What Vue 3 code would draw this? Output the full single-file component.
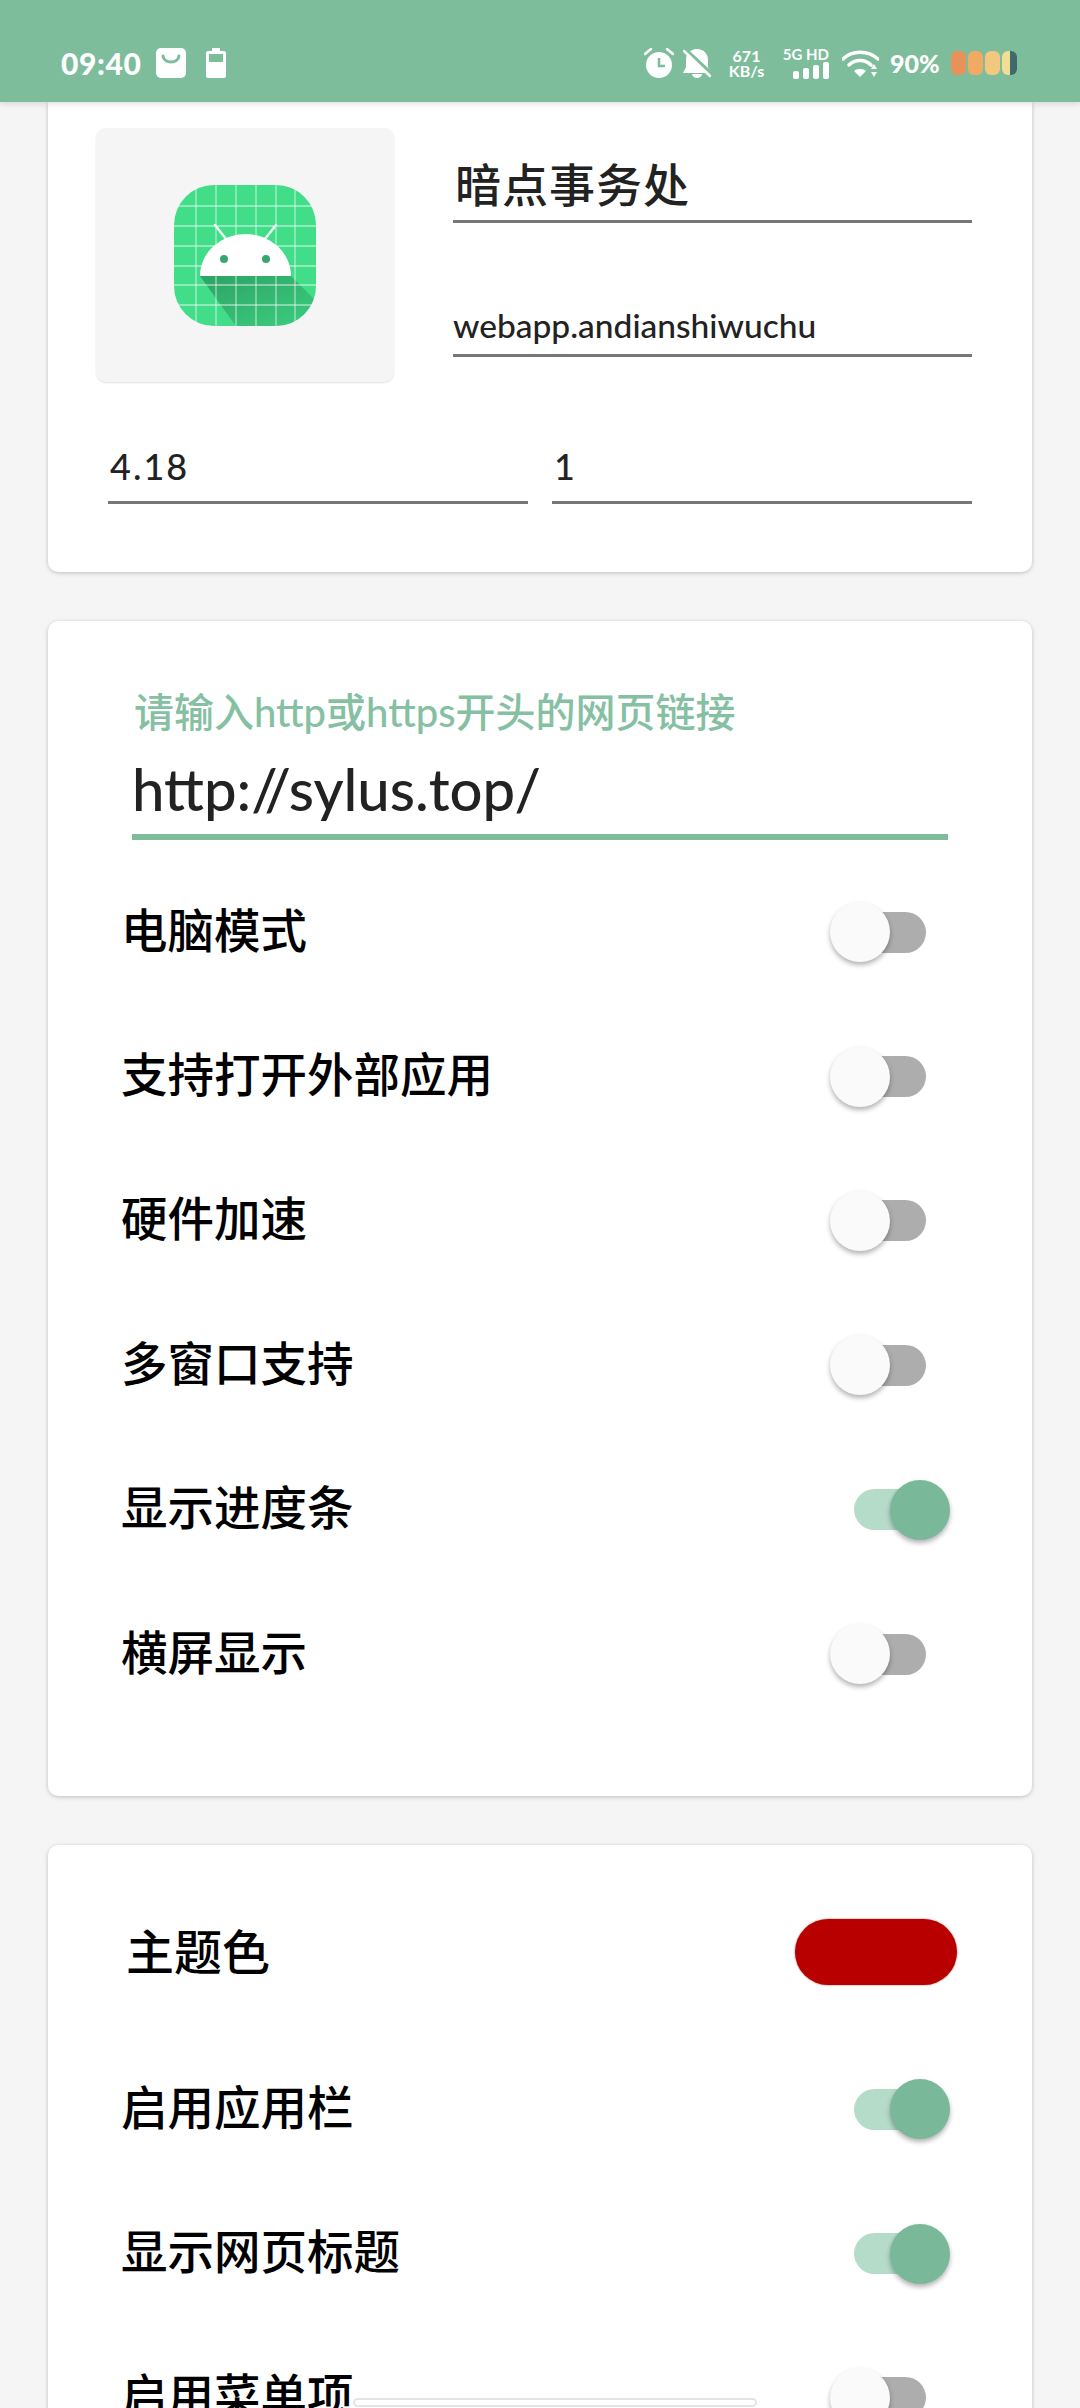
<script setup>
const gridX = [22, 42, 62, 82, 102, 121]
const gridY = [21, 41, 61, 81, 100, 120]

const webRows = [
  { label: '电脑模式', on: false },
  { label: '支持打开外部应用', on: false },
  { label: '硬件加速', on: false },
  { label: '多窗口支持', on: false },
  { label: '显示进度条', on: true },
  { label: '横屏显示', on: false }
]

const themeRows = [
  { label: '启用应用栏', on: true },
  { label: '显示网页标题', on: true },
  { label: '启用菜单项', on: false }
]

const batteryCells = ['#e8925a', '#f0aa64', '#f4c77f', '#f3dc96']
</script>

<template>
  <div class="page">
    <header class="status">
      <div class="status-left">
        <span class="time">09:40</span>
        <svg class="bag" width="30" height="30" viewBox="0 0 30 30">
          <path d="M5 0h20a5 5 0 0 1 5 5v20a5 5 0 0 1-5 5H5a5 5 0 0 1-5-5V5a5 5 0 0 1 5-5z" fill="#fff" />
          <path d="M7 8c1 8 15 8 16 0" fill="none" stroke="#7dbd9b" stroke-width="3" stroke-linecap="round" />
        </svg>
        <svg class="cell" width="20" height="30" viewBox="0 0 20 30">
          <path d="M6 0h8v3h4a2 2 0 0 1 2 2v23a2 2 0 0 1-2 2H2a2 2 0 0 1-2-2V5a2 2 0 0 1 2-2h4z" fill="#fff" />
          <rect x="3" y="6" width="14" height="8" fill="#7dbd9b" />
        </svg>
      </div>
      <div class="status-right">
        <svg class="alarm" width="30" height="30" viewBox="0 0 30 30">
          <circle cx="15" cy="17" r="13" fill="#fff" />
          <path d="M1 6l6-5M29 6l-6-5" stroke="#fff" stroke-width="2.5" stroke-linecap="round" />
          <path d="M15 10v8h6" fill="none" stroke="#7dbd9b" stroke-width="2.5" />
        </svg>
        <svg class="bell" width="28" height="29" viewBox="0 0 28 29">
          <path d="M14 0c7 0 11 5 11 11v7l3 6H0l3-6v-7C3 5 7 0 14 0z" fill="#fff" />
          <path d="M9 25h10a5 4 0 0 1-10 0z" fill="#fff" />
          <path d="M2 0l27 25" stroke="#7dbd9b" stroke-width="3.5" />
          <path d="M1 2l26 25" stroke="#fff" stroke-width="2.5" stroke-linecap="round" />
        </svg>
        <div class="speed">
          <span>671</span>
          <span>KB/s</span>
        </div>
        <div class="signal">
          <span>5G HD</span>
          <svg width="36" height="17" viewBox="0 0 36 17">
            <rect x="0" y="9" width="6" height="8" rx="2" fill="#fff" />
            <rect x="10" y="6" width="6" height="11" rx="2" fill="#fff" />
            <rect x="20" y="3" width="6" height="14" rx="2" fill="#fff" />
            <rect x="30" y="0" width="6" height="17" rx="2" fill="#fff" />
          </svg>
        </div>
        <svg class="wifi" width="37" height="29" viewBox="0 0 37 29">
          <path d="M1 10c9-9 25-9 35 0" fill="none" stroke="#fff" stroke-width="3.5" stroke-linecap="round" />
          <path d="M7 16c6-6 16-6 22 0" fill="none" stroke="#fff" stroke-width="3.5" stroke-linecap="round" />
          <path d="M12 22c4-3 8-3 12 0l-6 6z" fill="#fff" />
          <path d="M29 20l3-5 3 5zM29 23h6l-3 5z" fill="#fff" />
        </svg>
        <span class="percent">90%</span>
        <div class="battery">
          <span v-for="color in batteryCells" :key="color" class="battery-cell" :style="{ background: color }"></span>
          <span class="battery-end"></span>
        </div>
      </div>
    </header>

    <main class="content">
      <section class="card app-card">
        <div class="app-top">
          <div class="icon-box">
            <svg width="142" height="141" viewBox="0 0 142 141">
              <defs>
                <clipPath id="squircle">
                  <rect width="142" height="141" rx="40" />
                </clipPath>
                <linearGradient id="fade" x1="0.15" y1="0" x2="0.85" y2="1">
                  <stop offset="0" stop-color="#2a9c60" stop-opacity="0.85" />
                  <stop offset="1" stop-color="#2a9c60" stop-opacity="0.1" />
                </linearGradient>
              </defs>
              <g clip-path="url(#squircle)">
                <rect width="142" height="141" fill="#42dd88" />
                <path d="M26 91h91l40 40v30H76z" fill="url(#fade)" />
                <path v-for="x in gridX" :key="x" :d="`M${x} 0v141`" stroke="#fff" stroke-opacity="0.55" stroke-width="1.3" />
                <path v-for="y in gridY" :key="y" :d="`M0 ${y}h142`" stroke="#fff" stroke-opacity="0.55" stroke-width="1.3" />
              </g>
              <path d="M41 40l11 14M102 40l-11 14" stroke="#e8fbf0" stroke-width="2.5" stroke-linecap="round" />
              <path d="M26 91a45.500 42 0 0 1 91 0z" fill="#fff" />
              <circle cx="50" cy="74" r="4" fill="#36a86c" />
              <circle cx="92" cy="74" r="4" fill="#36a86c" />
            </svg>
          </div>
          <div class="app-fields">
            <div class="field title-field">暗点事务处</div>
            <div class="field package-field">webapp.andianshiwuchu</div>
          </div>
        </div>
        <div class="version-row">
          <div class="field version-field">4.18</div>
          <div class="field version-field">1</div>
        </div>
      </section>

      <section class="card web-card">
        <div class="url-box">
          <div class="url-label">请输入http或https开头的网页链接</div>
          <div class="url-value">http://sylus.top/</div>
        </div>
        <div v-for="row in webRows" :key="row.label" class="row">
          <span class="row-label">{{ row.label }}</span>
          <span class="switch" :class="{ on: row.on }">
            <span class="track"></span>
            <span class="thumb"></span>
          </span>
        </div>
      </section>

      <section class="card theme-card">
        <div class="theme-row">
          <span class="row-label big">主题色</span>
          <span class="swatch"></span>
        </div>
        <div v-for="row in themeRows" :key="row.label" class="row">
          <span class="row-label">{{ row.label }}</span>
          <span class="switch" :class="{ on: row.on }">
            <span class="track"></span>
            <span class="thumb"></span>
          </span>
        </div>
      </section>
    </main>

    <div class="gesture"></div>
  </div>
</template>

<style>
html,
body {
  margin: 0;
  background: #f5f5f5;
}
</style>

<style scoped>
.page {
  position: relative;
  width: 1080px;
  height: 2408px;
  overflow: hidden;
  background: #f5f5f5;
  color: #000;
  font-family: "Noto Sans CJK SC", "Lato", sans-serif;
}

.status {
  position: relative;
  z-index: 2;
  height: 102px;
  box-sizing: border-box;
  padding: 47px 63px 0 61px;
  display: flex;
  justify-content: space-between;
  align-items: flex-start;
  background: #7dbd9b;
  color: #fff;
  box-shadow: 0 2px 6px rgba(0, 0, 0, 0.12);
  font-family: "Lato", "Noto Sans CJK SC", sans-serif;
  font-weight: 700;
}

.status-left,
.status-right {
  display: flex;
  align-items: center;
  height: 32px;
}

.time {
  width: 79px;
  font-size: 30px;
  line-height: 32px;
  font-weight: 900;
  letter-spacing: 0.6px;
  white-space: nowrap;
}

.bag {
  margin-left: 16px;
}

.cell {
  margin-left: 20px;
}

.bell {
  margin-left: 9px;
}

.speed {
  margin-left: 18px;
  width: 35px;
  display: flex;
  flex-direction: column;
  align-items: center;
  font-size: 16px;
  line-height: 15px;
}

.signal {
  margin-left: 17px;
  width: 48px;
  display: flex;
  flex-direction: column;
  align-items: flex-end;
  font-size: 15px;
  line-height: 15px;
  white-space: nowrap;
}

.wifi {
  margin-left: 13px;
}

.percent {
  margin-left: 11px;
  width: 49px;
  font-size: 25px;
  line-height: 32px;
  font-weight: 900;
}

.battery {
  margin-left: 12px;
  display: flex;
  gap: 2px;
  height: 24px;
}

.battery-cell {
  width: 15px;
  border-radius: 6px;
}

.battery-cell:nth-child(4) {
  width: 8px;
  border-radius: 6px 0 0 6px;
}

.battery-end {
  width: 7px;
  margin-left: -2px;
  border-radius: 0 6px 6px 0;
  background: #41686a;
}

.content {
  padding: 0 48px;
  display: flex;
  flex-direction: column;
  gap: 49px;
}

.card {
  background: #fff;
  border-radius: 10px;
  box-shadow: 0 1px 4px rgba(0, 0, 0, 0.22);
}

.app-card {
  height: 470px;
  box-sizing: border-box;
  padding-top: 26px;
  border-radius: 0 0 10px 10px;
}

.app-top {
  display: flex;
  padding-left: 48px;
}

.icon-box {
  width: 298px;
  height: 254px;
  display: flex;
  justify-content: center;
  align-items: center;
  border-radius: 10px;
  background: #f5f5f5;
  box-shadow: 0 1px 2px rgba(0, 0, 0, 0.12);
}

.app-fields {
  width: 519px;
  height: 229px;
  margin-left: 59px;
  display: flex;
  flex-direction: column;
  justify-content: space-between;
}

.field {
  border-bottom: 3px solid #777;
  white-space: nowrap;
  color: #222;
}

.title-field {
  padding: 26px 0 10px 2px;
  font-size: 46px;
  line-height: 56px;
  font-weight: 500;
  letter-spacing: 1px;
}

.package-field {
  padding: 0 0 7px 0;
  font-family: "Lato", sans-serif;
  font-size: 33.5px;
  line-height: 44px;
  font-weight: 500;
}

.version-row {
  margin-top: 62px;
  padding: 0 60px;
  display: flex;
  gap: 24px;
}

.version-field {
  flex: 1;
  padding: 0 0 13px 2px;
  font-family: "Lato", sans-serif;
  font-size: 36px;
  line-height: 44px;
  letter-spacing: 2px;
  font-weight: 500;
}

.web-card {
  height: 1175px;
  box-sizing: border-box;
  padding-top: 65px;
}

.url-box {
  margin: 0 84px 0 84px;
  border-bottom: 6px solid #7dbd9b;
}

.url-label {
  padding-left: 2px;
  font-size: 40px;
  line-height: 52px;
  color: #86c0a2;
  white-space: nowrap;
  font-family: "Lato", "Noto Sans CJK SC", sans-serif;
  font-weight: 500;
}

.url-value {
  padding: 6px 0 0 0;
  font-family: "Lato", sans-serif;
  font-size: 58px;
  line-height: 90px;
  font-weight: 500;
  color: #222;
}

.row {
  height: 144.4px;
  padding: 0 82px 0 73px;
  display: flex;
  justify-content: space-between;
  align-items: center;
}

.url-box + .row {
  margin-top: 20px;
}

.row-label {
  padding-bottom: 10px;
  font-size: 46.5px;
  font-weight: 500;
}

.row-label.big {
  font-size: 48px;
  padding-bottom: 6px;
}

.switch {
  position: relative;
  width: 120px;
  height: 60px;
  display: flex;
  align-items: center;
}

.track {
  width: 72px;
  height: 41px;
  margin-left: 24px;
  border-radius: 21px;
  background: #adadad;
}

.thumb {
  position: absolute;
  left: 0;
  top: 0;
  width: 60px;
  height: 60px;
  border-radius: 50%;
  background: #fafafa;
  box-shadow: 0 3px 5px rgba(0, 0, 0, 0.3);
}

.switch.on .track {
  background: #b5dbc9;
}

.switch.on .thumb {
  left: 60px;
  background: #7ab89a;
}

.theme-card {
  height: 600px;
  padding-top: 74px;
  box-sizing: border-box;
}

.theme-row {
  height: 66px;
  padding: 0 75px 0 78px;
  display: flex;
  justify-content: space-between;
  align-items: center;
}

.theme-row + .row {
  margin-top: 52px;
}

.swatch {
  width: 162px;
  height: 66px;
  border-radius: 33px;
  background: #b80000;
  box-shadow: 0 0 2px rgba(120, 0, 0, 0.6);
}

.gesture {
  position: absolute;
  z-index: 3;
  left: 353px;
  top: 2398px;
  width: 404px;
  height: 9px;
  box-sizing: border-box;
  border: 2px solid #e4e4e4;
  border-radius: 5px;
  background: #fff;
}
</style>
